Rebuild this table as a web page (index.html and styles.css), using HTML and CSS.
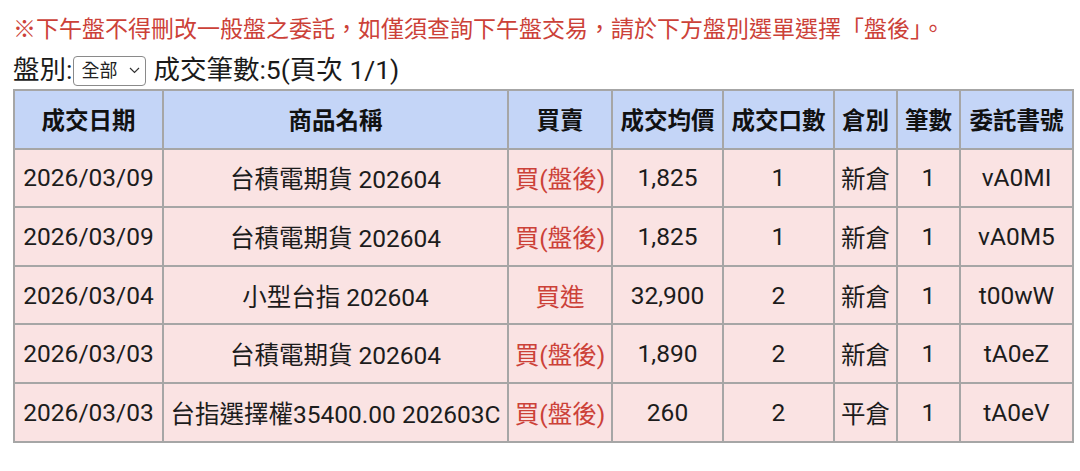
FILE: index.html
```html
<!DOCTYPE html>
<html lang="zh-Hant">
<head>
<meta charset="utf-8">
<title>成交查詢</title>
<link rel="stylesheet" href="styles.css">
</head>
<body>
<div class="page">
  <p class="notice">※下午盤不得刪改一般盤之委託，如僅須查詢下午盤交易，請於下方盤別選單選擇「盤後」。</p>
  <div class="filter">
    <span class="label">盤別:</span>
    <span class="select"><span class="select-text">全部</span><svg class="chev" width="11" height="7" viewBox="0 0 11 7"><path d="M1 1l4.5 4.5L10 1" fill="none" stroke="#333" stroke-width="1.2"/></svg></span>
    <span class="count">成交筆數:5(頁次 1/1)</span>
  </div>
  <table class="grid">
    <colgroup>
      <col class="c1"><col class="c2"><col class="c3"><col class="c4"><col class="c5"><col class="c6"><col class="c7"><col class="c8">
    </colgroup>
    <thead>
      <tr><th>成交日期</th><th>商品名稱</th><th>買賣</th><th>成交均價</th><th>成交口數</th><th>倉別</th><th>筆數</th><th>委託書號</th></tr>
    </thead>
    <tbody>
      <tr><td>2026/03/09</td><td>台積電期貨 202604</td><td class="buy">買(盤後)</td><td>1,825</td><td>1</td><td>新倉</td><td>1</td><td>vA0MI</td></tr>
      <tr><td>2026/03/09</td><td>台積電期貨 202604</td><td class="buy">買(盤後)</td><td>1,825</td><td>1</td><td>新倉</td><td>1</td><td>vA0M5</td></tr>
      <tr><td>2026/03/04</td><td>小型台指 202604</td><td class="buy">買進</td><td>32,900</td><td>2</td><td>新倉</td><td>1</td><td>t00wW</td></tr>
      <tr><td>2026/03/03</td><td>台積電期貨 202604</td><td class="buy">買(盤後)</td><td>1,890</td><td>2</td><td>新倉</td><td>1</td><td>tA0eZ</td></tr>
      <tr><td>2026/03/03</td><td>台指選擇權35400.00 202603C</td><td class="buy">買(盤後)</td><td>260</td><td>2</td><td>平倉</td><td>1</td><td>tA0eV</td></tr>
    </tbody>
  </table>
</div>
</body>
</html>
```
FILE: styles.css
```css
html, body {
  margin: 0;
  padding: 0;
  background: #fff;
}
body {
  font-family: Roboto, "Noto Sans CJK TC", "Noto Sans", sans-serif;
  color: #1a1a1a;
}
.page {
  padding: 15px 6px 0 13px;
}
.notice {
  margin: 0;
  font-size: 23px;
  line-height: 30px;
  color: #cc4138;
  white-space: nowrap;
}
.filter {
  display: flex;
  align-items: center;
  height: 39px;
  margin-top: 5px;
  font-size: 26.5px;
}
.label {
  line-height: 32px;
}
.select {
  display: inline-flex;
  align-items: center;
  justify-content: space-between;
  box-sizing: border-box;
  width: 73px;
  height: 30px;
  margin: 2px 7px 0 1px;
  padding: 0 5px 0 7px;
  border: 1px solid #8a8a8a;
  border-radius: 4px;
  background: #fff;
}
.select-text {
  font-size: 18px;
  line-height: 20px;
  color: #222;
}
.chev {
  display: block;
}
.count {
  line-height: 32px;
}
.grid {
  width: 1059px;
  border-collapse: collapse;
  table-layout: fixed;
}
.c1 { width: 149px; }
.c2 { width: 345px; }
.c3 { width: 104px; }
.c4 { width: 111px; }
.c5 { width: 111px; }
.c6 { width: 63px; }
.c7 { width: 63px; }
.c8 { width: 113px; }
.grid th, .grid td {
  border: 2px solid #a6a6a6;
  text-align: center;
  padding: 0;
  white-space: nowrap;
  height: 56.6px;
}
.grid th {
  background: #c4d5f7;
  font-size: 23.5px;
  font-weight: 700;
  color: #111;
}
.grid td {
  background: #fae3e3;
  font-size: 24.5px;
  color: #1c1c1c;
}
.grid td.buy {
  color: #cc4138;
}
```
